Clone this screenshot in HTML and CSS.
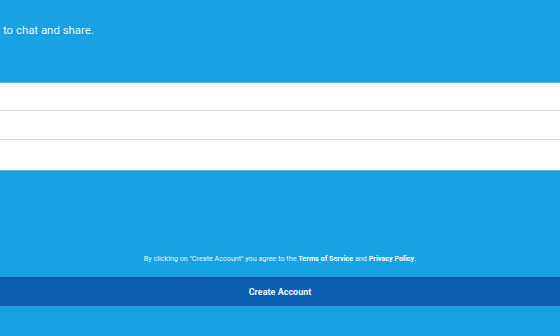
FILE: index.html
```html
<!DOCTYPE html>
<html lang="en">
<head>
  <meta charset="UTF-8" />
  <meta name="viewport" content="width=device-width, initial-scale=1.0" />
  <title>Create Account</title>
  <link rel="stylesheet" href="styles.css">
</head>
<body>
  <div class="signup">
    <!-- Intro -->
    <p class="intro">to chat and share.</p>
    <!-- Fields -->
    <div class="fields">
      <input type="text" class="field" />
      <input type="email" class="field" />
      <input type="password" class="field" />
    </div>
    <!-- Terms -->
    <p class="terms">By clicking on "Create Account" you agree to the <b>Terms of Service</b> and <b>Privacy Policy</b>.</p>
    <button class="create-btn">Create Account</button>
  </div>
</body>
</html>
```

FILE: styles.css
```css
/* Global Styles */
html, body {
  margin: 0;
  padding: 0;
  height: 100%;
  font-family: 'Roboto', 'Liberation Sans', sans-serif;
  background: #19a2e1;
  overflow: hidden;
}
.signup {
  display: flex;
  flex-direction: column;
  height: 100%;
}
/* Intro */
.intro {
  margin: 0;
  padding: 23px 3px 0;
  font-size: 11.4px;
  line-height: 14px;
  color: #e8f5fc;
}
/* Fields */
.fields {
  display: flex;
  flex-direction: column;
  margin-top: 45px;
  border-top: 1px solid #5cbdea;
  border-bottom: 1px solid #5cbdea;
}
.field {
  height: 28px;
  margin: 0;
  padding: 0 10px;
  border: none;
  border-bottom: 1px solid #dedede;
  background: #fff;
  outline: none;
  box-sizing: border-box;
}
.field:nth-child(2) {
  height: 29px;
}
.field:last-child {
  height: 30px;
  border-bottom: none;
}
/* Terms */
.terms {
  margin: 83px 0 0;
  text-align: center;
  font-size: 7.2px;
  line-height: 10px;
  color: #e8f5fc;
}
.terms b {
  color: #fff;
}
.create-btn {
  margin-top: 13px;
  height: 29px;
  border: none;
  background: #0c5fae;
  color: #eef5fb;
  font-family: inherit;
  font-size: 9px;
  font-weight: bold;
  cursor: pointer;
}
```
